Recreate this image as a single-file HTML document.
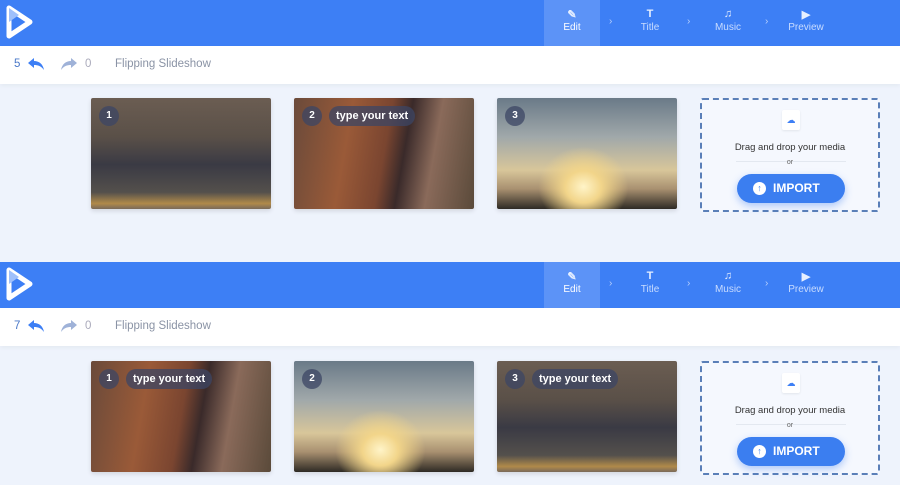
<!DOCTYPE html>
<html><head><meta charset="utf-8"><style>
*{margin:0;padding:0;box-sizing:border-box}
body{width:900px;height:485px;overflow:hidden;background:#eef3fc;font-family:"Liberation Sans",sans-serif;position:relative}
.p{position:absolute;left:0;width:900px}
.hdr{position:absolute;left:0;top:0;width:900px;height:46px;background:#3d7ff5}
.tb{position:absolute;left:0;top:46px;width:900px;height:38px;background:#fff;box-shadow:0 2px 4px rgba(0,0,0,.04)}
.tab{position:absolute;top:0;height:46px;width:56px;color:#c9dcff;font-size:10px;text-align:center}
.tab .i{display:block;margin-top:8px;height:14px;font-size:11px;font-weight:bold;color:#e6efff}
.tab.a{background:#5c93f7;color:#fff}
.chev{position:absolute;top:16px;color:#b8cffb;font-size:10px}
.t{position:absolute;font-size:11.5px;color:#8a93a5}
.ph{position:absolute;width:180px;height:111px;border-radius:2px;overflow:hidden;box-shadow:0 2px 5px rgba(0,0,0,.12)}
.n{position:absolute;left:8px;top:8px;width:20px;height:20px;border-radius:10px;background:rgba(60,70,100,.75);color:#fff;font-size:10px;font-weight:bold;text-align:center;line-height:20px}
.tx{position:absolute;left:35px;top:8px;height:20px;padding:0 7px;border-radius:10px;background:rgba(60,70,100,.75);color:#fff;font-size:11px;font-weight:bold;line-height:20px}
.ph1{background:linear-gradient(180deg,#6b5d52 0%,#5a5048 35%,#3a3a44 60%,#54504c 85%,#b08a4a 95%,#7a6a5a 100%)}
.ph2{background:linear-gradient(100deg,#6a4a3a 0%,#9a5a38 30%,#7a4530 50%,#3a2a2a 60%,#8a6a5a 75%,#5a4a3a 100%)}
.ph3{background:radial-gradient(ellipse 45px 40px at 48% 80%,#fff4c8 0%,#f2d58a 40%,transparent 100%),linear-gradient(180deg,#6a7a88 0%,#a0a8aa 35%,#d8c69a 65%,#a89070 82%,#2e2a24 100%)}
.drop{position:absolute;width:180px;height:114px;border:2px dashed #5a7fb8;border-radius:3px;background:#f5f8fe}
.btn{position:absolute;left:35px;top:74px;width:108px;height:29px;border-radius:15px;background:#3b7ef0;box-shadow:0 3px 8px rgba(59,126,240,.4);color:#fff;font-weight:bold;font-size:12px;line-height:29px;padding-left:36px}
.btn:before{content:"↑";position:absolute;left:16px;top:8px;width:13px;height:13px;border-radius:7px;background:#fff;color:#3b7ef0;font-size:9px;line-height:13px;text-align:center;padding:0}
.ic{position:absolute;left:80px;top:10px;width:18px;height:20px;background:#fff;border-radius:2px;box-shadow:0 1px 2px rgba(0,0,0,.08);color:#3d7ff5;font-size:9px;text-align:center;line-height:20px}
</style></head><body>

<div class="p" style="top:0">
 <div class="hdr">
  <svg style="position:absolute;left:4px;top:4px" width="30" height="36" viewBox="0 0 30 36"><path d="M5 4 L5 32 L26 18 Z" fill="none" stroke="#fff" stroke-width="5" stroke-linejoin="round"/><path d="M5 4 L15 11 L5 18Z" fill="#9fc0fb"/></svg>
  <div class="tab a" style="left:544px"><span class="i">✎</span>Edit</div>
  <span class="chev" style="left:609px">›</span>
  <div class="tab" style="left:622px"><span class="i">T</span>Title</div>
  <span class="chev" style="left:687px">›</span>
  <div class="tab" style="left:700px"><span class="i">♫</span>Music</div>
  <span class="chev" style="left:765px">›</span>
  <div class="tab" style="left:778px"><span class="i">▶</span>Preview</div>
 </div>
 <div class="tb">
  <span class="t" style="left:14px;top:12px;color:#4a78c8">5</span>
  <svg style="position:absolute;left:27px;top:11px" width="18" height="14" viewBox="0 0 18 14"><path d="M7 1 L1 6 L7 11 L7 8 C11 8 14 9 17 13 C16 7 12 4 7 4Z" fill="#3d7ff5"/></svg>
  <svg style="position:absolute;left:60px;top:11px" width="18" height="14" viewBox="0 0 18 14"><path d="M11 1 L17 6 L11 11 L11 8 C7 8 4 9 1 13 C2 7 6 4 11 4Z" fill="#9fb2d8"/></svg>
  <span class="t" style="left:85px;top:12px;color:#aab">0</span>
  <span class="t" style="left:115px;top:12px">Flipping Slideshow</span>
 </div>
 <div class="ph ph1" style="left:91px;top:98px"><div class="n">1</div></div>
 <div class="ph ph2" style="left:294px;top:98px"><div class="n">2</div><div class="tx">type your text</div></div>
 <div class="ph ph3" style="left:497px;top:98px"><div class="n">3</div></div>
 <div class="drop" style="left:700px;top:98px">
  <div class="ic">☁</div>
  <div style="position:absolute;left:0;width:176px;top:42px;text-align:center;font-size:9.5px;color:#333">Drag and drop your media</div>
  <div style="position:absolute;left:34px;width:110px;top:61px;border-top:1px solid #e3e8f0"></div>
  <div style="position:absolute;left:0;width:176px;top:59px;text-align:center;font-size:7px;color:#666">or</div>
  <div class="btn">IMPORT</div>
 </div>
</div>

<div class="p" style="top:262px">
 <div class="hdr">
  <svg style="position:absolute;left:4px;top:4px" width="30" height="36" viewBox="0 0 30 36"><path d="M5 4 L5 32 L26 18 Z" fill="none" stroke="#fff" stroke-width="5" stroke-linejoin="round"/><path d="M5 4 L15 11 L5 18Z" fill="#9fc0fb"/></svg>
  <div class="tab a" style="left:544px"><span class="i">✎</span>Edit</div>
  <span class="chev" style="left:609px">›</span>
  <div class="tab" style="left:622px"><span class="i">T</span>Title</div>
  <span class="chev" style="left:687px">›</span>
  <div class="tab" style="left:700px"><span class="i">♫</span>Music</div>
  <span class="chev" style="left:765px">›</span>
  <div class="tab" style="left:778px"><span class="i">▶</span>Preview</div>
 </div>
 <div class="tb">
  <span class="t" style="left:14px;top:12px;color:#4a78c8">7</span>
  <svg style="position:absolute;left:27px;top:11px" width="18" height="14" viewBox="0 0 18 14"><path d="M7 1 L1 6 L7 11 L7 8 C11 8 14 9 17 13 C16 7 12 4 7 4Z" fill="#3d7ff5"/></svg>
  <svg style="position:absolute;left:60px;top:11px" width="18" height="14" viewBox="0 0 18 14"><path d="M11 1 L17 6 L11 11 L11 8 C7 8 4 9 1 13 C2 7 6 4 11 4Z" fill="#9fb2d8"/></svg>
  <span class="t" style="left:85px;top:12px;color:#aab">0</span>
  <span class="t" style="left:115px;top:12px">Flipping Slideshow</span>
 </div>
 <div class="ph ph2" style="left:91px;top:99px"><div class="n">1</div><div class="tx">type your text</div></div>
 <div class="ph ph3" style="left:294px;top:99px"><div class="n">2</div></div>
 <div class="ph ph1" style="left:497px;top:99px"><div class="n">3</div><div class="tx">type your text</div></div>
 <div class="drop" style="left:700px;top:99px">
  <div class="ic">☁</div>
  <div style="position:absolute;left:0;width:176px;top:42px;text-align:center;font-size:9.5px;color:#333">Drag and drop your media</div>
  <div style="position:absolute;left:34px;width:110px;top:61px;border-top:1px solid #e3e8f0"></div>
  <div style="position:absolute;left:0;width:176px;top:59px;text-align:center;font-size:7px;color:#666">or</div>
  <div class="btn">IMPORT</div>
 </div>
</div>
</body></html>
